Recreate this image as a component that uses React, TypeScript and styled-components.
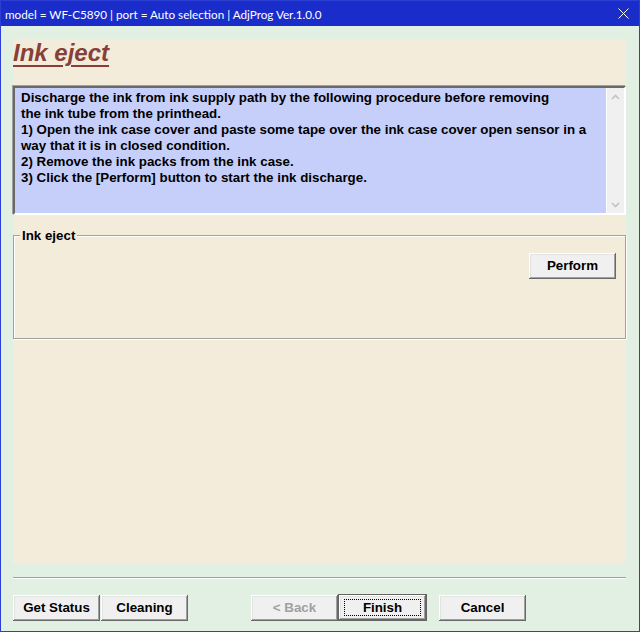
import React from 'react';
import styled, { createGlobalStyle } from 'styled-components';

const GlobalStyle = createGlobalStyle`
  html, body {
    margin: 0;
    padding: 0;
    background: #ffffff;
  }
`;

const StyledWindow = styled.div`
  box-sizing: border-box;
  width: 640px;
  height: 632px;
  border: 1px solid #2b3fd2;
  background-color: #e1f0e2;
  display: flex;
  flex-direction: column;
  font-family: 'Liberation Sans', Arial, sans-serif;
`;

const StyledTitleBar = styled.div`
  height: 25px;
  flex-shrink: 0;
  display: flex;
  align-items: center;
  justify-content: space-between;
  padding: 0 10px 0 4px;
  background-color: #1a2dcb;
  color: #ffffff;
  font-family: Lato, 'Noto Sans', sans-serif;
  font-size: 11.7px;
`;

const StyledBody = styled.div`
  flex: 1;
  display: flex;
  flex-direction: column;
  padding: 13px 13px 0 12px;
`;

const StyledPanel = styled.div`
  height: 524px;
  display: flex;
  flex-direction: column;
  background-color: #f3ecdb;
`;

const StyledHeading = styled.div`
  height: 47px;
  font-size: 24px;
  line-height: 28px;
  font-weight: 700;
  font-style: italic;
  color: #873f39;
  text-decoration: underline;
  text-decoration-thickness: 2px;
  text-underline-offset: 4px;
`;

const StyledTextBox = styled.div`
  box-sizing: border-box;
  height: 129px;
  display: flex;
  border-style: solid;
  border-width: 2px;
  border-color: #696969 #ffffff #ffffff #696969;
  box-shadow: -1px -1px 0 #a0a0a0;
  background-color: #c6cffa;
`;

const StyledText = styled.div`
  flex: 1;
  padding: 2px 0 0 6px;
  font-size: 13.33px;
  line-height: 16px;
  font-weight: 700;
  color: #000000;
  white-space: nowrap;
  overflow: hidden;
`;

const StyledScrollbar = styled.div`
  width: 17px;
  display: flex;
  flex-direction: column;
  justify-content: space-between;
  align-items: center;
  padding: 6px 0 5px;
  border-left: 1px solid #ffffff;
  background-color: #f0f0f0;
`;

const StyledGroup = styled.div`
  position: relative;
  box-sizing: border-box;
  height: 104px;
  margin-top: 20px;
  border: 1px solid #a0a0a0;
  box-shadow: inset 1px 1px 0 #ffffff, 1px 1px 0 #ffffff;
  display: flex;
  justify-content: flex-end;
  align-items: flex-start;
  padding: 17px 9px 0 0;
`;

const StyledLegend = styled.span`
  position: absolute;
  left: 6px;
  top: -8px;
  padding: 0 2px;
  background-color: #f3ecdb;
  font-size: 13.33px;
  line-height: 16px;
  font-weight: 700;
  color: #000000;
`;

const StyledSeparator = styled.div`
  margin-top: 14px;
  height: 1px;
  background-color: #a0a0a0;
  border-bottom: 1px solid #ffffff;
`;

const StyledButtonRow = styled.div`
  margin-top: 15px;
  display: flex;
  align-items: center;
`;

const StyledButton = styled.button<{ $gap?: number; $isDefault?: boolean }>`
  box-sizing: border-box;
  width: ${({ $isDefault }) => ($isDefault ? 89 : 87)}px;
  height: ${({ $isDefault }) => ($isDefault ? 27 : 26)}px;
  margin: 0 0 0 ${({ $gap }) => $gap ?? 0}px;
  padding: ${({ $isDefault }) => ($isDefault ? '4px 5px' : '0 0 1px')};
  display: flex;
  align-items: stretch;
  justify-content: center;
  border: ${({ $isDefault }) => ($isDefault ? '1px solid #646464' : 'none')};
  background-color: #f0f0f0;
  box-shadow: inset -1px -1px 0 #696969, inset 1px 1px 0 #ffffff,
    inset -2px -2px 0 #a0a0a0, inset 2px 2px 0 #e3e3e3;
  font-family: 'Liberation Sans', Arial, sans-serif;
  font-size: 13.33px;
  font-weight: 700;
  color: ${({ disabled }) => (disabled ? '#a0a0a0' : '#000000')};
  cursor: default;
`;

const StyledButtonLabel = styled.span<{ $focused?: boolean }>`
  flex: 1;
  display: flex;
  align-items: center;
  justify-content: center;
  border: 1px dotted ${({ $focused }) => ($focused ? '#000000' : 'transparent')};
`;

const UpArrow = ({ down }: { down?: boolean }) => (
  <svg width="9" height="6" viewBox="0 0 9 6">
    <path
      d={down ? 'M1 1 L4.5 4.5 L8 1' : 'M1 5 L4.5 1.5 L8 5'}
      fill="none"
      stroke="#c2c2c2"
      strokeWidth="1.6"
    />
  </svg>
);

const CloseIcon = () => (
  <svg width="11" height="11" viewBox="0 0 11 11">
    <path d="M0.5 0.5 L10.5 10.5 M10.5 0.5 L0.5 10.5" stroke="#ffffff" strokeWidth="1" />
  </svg>
);

const lines = [
  'Discharge the ink from ink supply path by the following procedure before removing',
  'the ink tube from the printhead.',
  '1) Open the ink case cover and paste some tape over the ink case cover open sensor in a',
  'way that it is in closed condition.',
  '2) Remove the ink packs from the ink case.',
  '3) Click the [Perform] button to start the ink discharge.',
];

const App = () => (
  <>
    <GlobalStyle />
    <StyledWindow>
      <StyledTitleBar>
        <span>model = WF-C5890 | port = Auto selection | AdjProg Ver.1.0.0</span>
        <CloseIcon />
      </StyledTitleBar>
      <StyledBody>
        <StyledPanel>
          <StyledHeading>Ink eject</StyledHeading>
          <StyledTextBox>
            <StyledText>
              {lines.map((line) => (
                <div key={line}>{line}</div>
              ))}
            </StyledText>
            <StyledScrollbar>
              <UpArrow />
              <UpArrow down />
            </StyledScrollbar>
          </StyledTextBox>
          <StyledGroup>
            <StyledLegend>Ink eject</StyledLegend>
            <StyledButton>
              <StyledButtonLabel>Perform</StyledButtonLabel>
            </StyledButton>
          </StyledGroup>
        </StyledPanel>
        <StyledSeparator />
        <StyledButtonRow>
          <StyledButton>
            <StyledButtonLabel>Get Status</StyledButtonLabel>
          </StyledButton>
          <StyledButton $gap={1}>
            <StyledButtonLabel>Cleaning</StyledButtonLabel>
          </StyledButton>
          <StyledButton $gap={63} disabled>
            <StyledButtonLabel>&lt; Back</StyledButtonLabel>
          </StyledButton>
          <StyledButton $isDefault>
            <StyledButtonLabel $focused>Finish</StyledButtonLabel>
          </StyledButton>
          <StyledButton $gap={12}>
            <StyledButtonLabel>Cancel</StyledButtonLabel>
          </StyledButton>
        </StyledButtonRow>
      </StyledBody>
    </StyledWindow>
  </>
);

export default App;
